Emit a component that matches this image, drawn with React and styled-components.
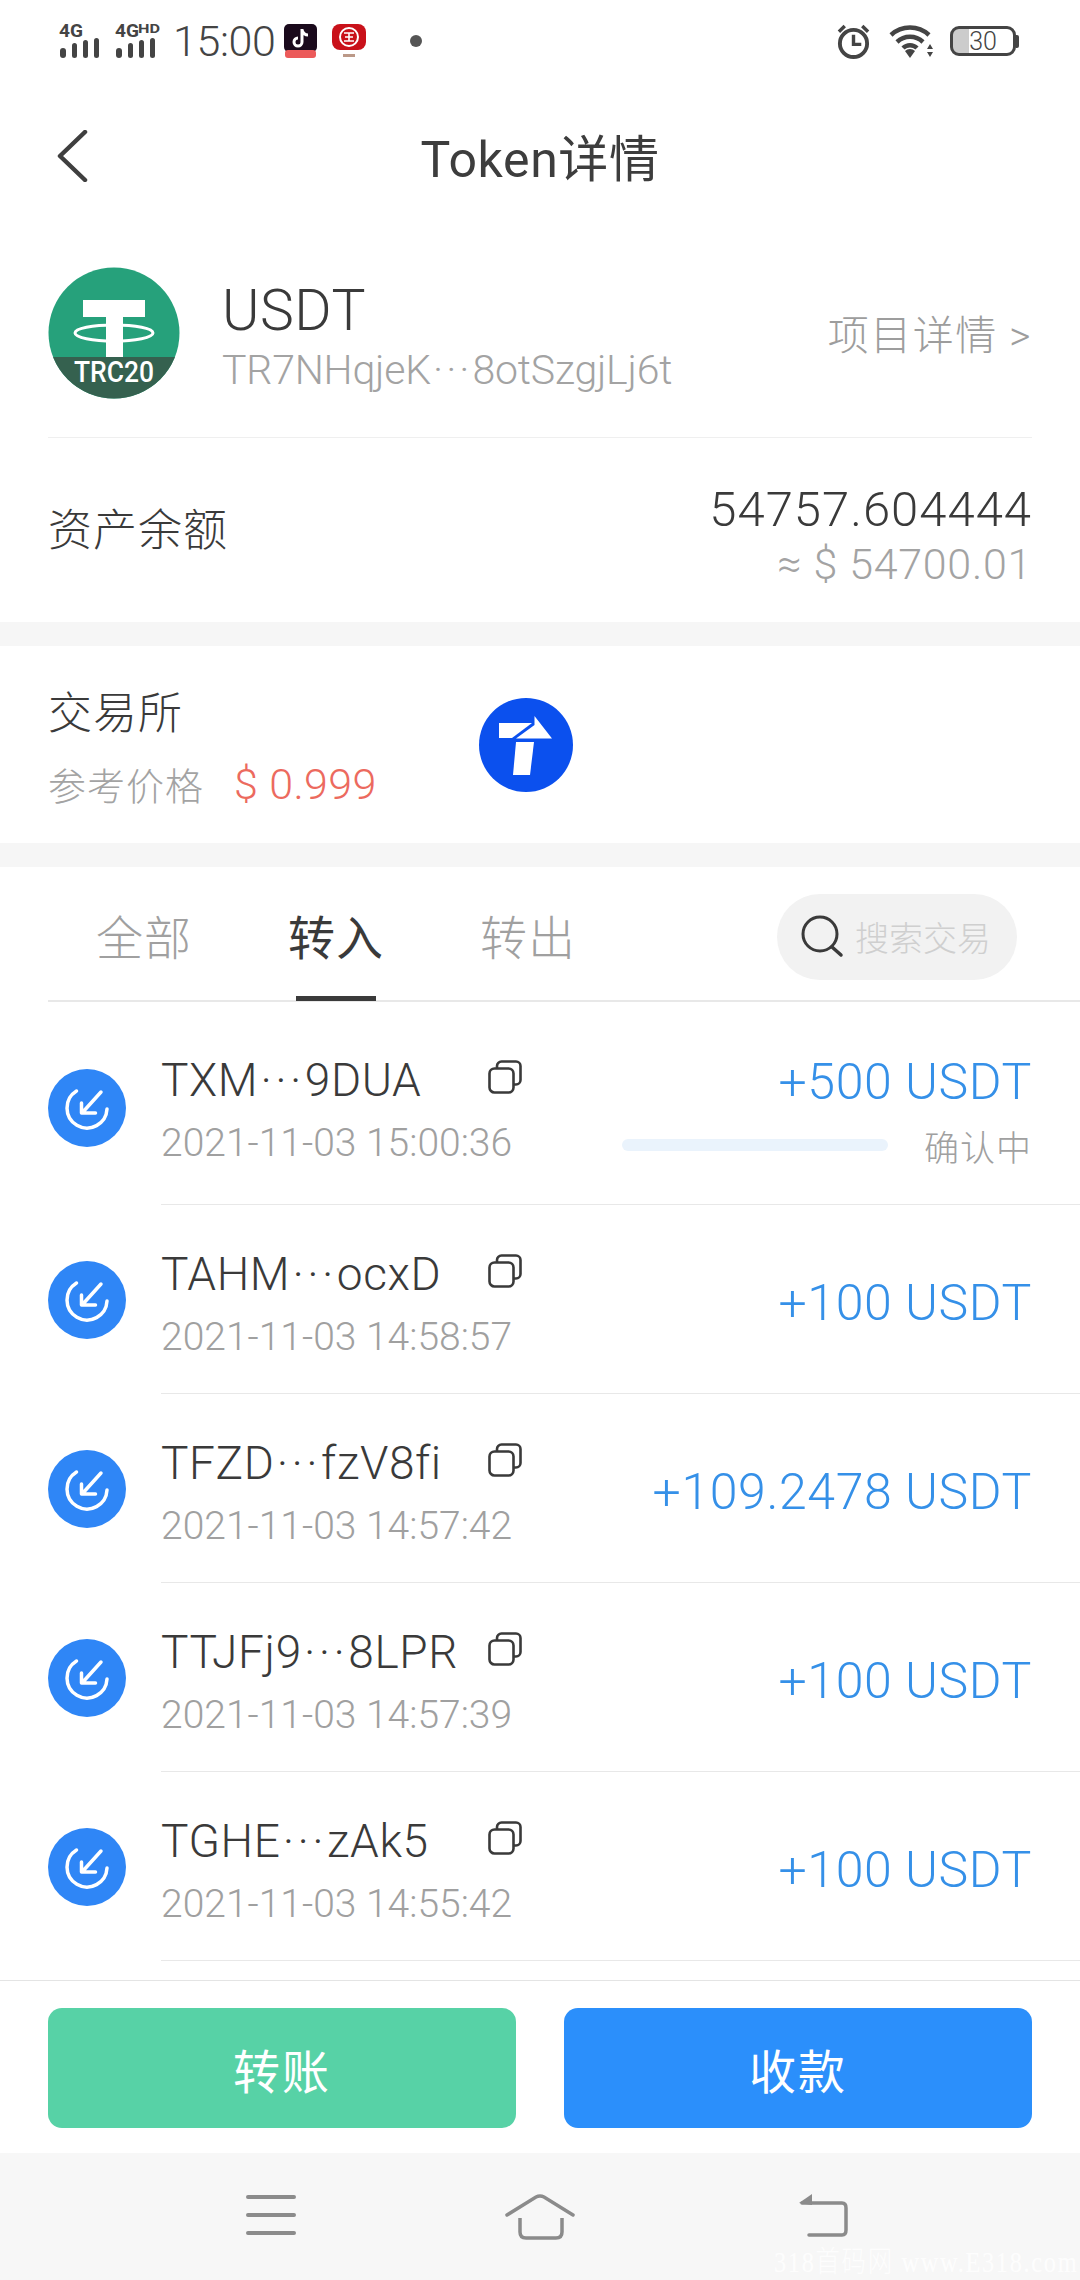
import React from "react";
import styled, { createGlobalStyle } from "styled-components";

const Global = createGlobalStyle`
  html, body { margin: 0; padding: 0; background: #fff; }
  * { box-sizing: border-box; }
`;
const CJK = `Roboto, "Noto Sans CJK SC", sans-serif`;

const Page = styled.div`
  position: relative; width: 1080px; height: 2280px; display: flex; flex-direction: column;
  overflow: hidden; background: #fff; font-family: ${CJK}; font-weight: 300; color: #3a3a3a;
`;
const StatusBar = styled.div`
  height: 80px; padding: 18px 61px 0 58px; display: flex; align-items: flex-start; justify-content: space-between;
`;
const StatusGroup = styled.div`display: flex; align-items: center; height: 46px;`;
const SignalWrap = styled.svg`margin-right: 10px; overflow: visible;`;
const Clock = styled.span`font-size: 43px; font-weight: 300; color: #444; margin: 0 9px 0 3px; letter-spacing: -0.4px;`;
const BankGap = styled.span`width: 15px;`;
const Dot = styled.span`width: 12px; height: 12px; border-radius: 50%; background: #555; margin-left: 44px;`;
const BatteryBox = styled.span`
  width: 66px; height: 30px; border: 3px solid #444; border-radius: 9px; margin-left: 14px;
  display: flex; align-items: center; justify-content: center; font-size: 25px; color: #444; line-height: 1; font-weight: 300;
  background: linear-gradient(90deg, #ccc 0 16px, #fff 16px);
`;
const BatteryCap = styled.span`width: 3px; height: 13px; background: #444; border-radius: 0 2px 2px 0;`;
const Header = styled.div`
  height: 154px; display: flex; align-items: center; justify-content: center; position: relative; padding-bottom: 5px;
`;
const Back = styled.svg`position: absolute; left: 56px; top: 50px;`;
const Title = styled.h1`margin: 0; font-size: 50px; font-weight: 400; color: #3d3d3d; letter-spacing: 0.6px;`;
const TokenRow = styled.div`
  margin: 0 48px; height: 204px; display: flex; align-items: center; border-bottom: 1px solid #efefef; padding-bottom: 6px;
`;
const TokenInfo = styled.div`margin-left: 42px; padding-top: 9px; flex: 1; display: flex; flex-direction: column;`;
const TokenName = styled.div`font-size: 57px; line-height: 66px; color: #3a3a3a; letter-spacing: 0.5px;`;
const TokenAddr = styled.div`font-size: 41px; line-height: 52px; color: #a3a3a3; letter-spacing: -0.2px;`;
const Dots = styled.span`letter-spacing: 0.075em; margin-left: 0.05em;`;
const DetailLink = styled.div`font-size: 41px; color: #9d9d9d; letter-spacing: 1.5px; margin-bottom: 2px;`;
const BalanceRow = styled.div`
  padding: 0 48px; height: 184px; display: flex; align-items: center; justify-content: space-between;
`;
const Label = styled.div`font-size: 44px; color: #3a3a3a; letter-spacing: 1px; margin-bottom: ${p => p.$lift || 0}px;`;
const BalanceRight = styled.div`text-align: right; padding-top: 9px;`;
const BalanceMain = styled.div`font-size: 49px; line-height: 58px; color: #3a3a3a; letter-spacing: 1px;`;
const BalanceSub = styled.div`font-size: 43px; line-height: 50px; color: #a3a3a3; letter-spacing: 0.7px;`;
const Band = styled.div`height: 24px; background: #f6f6f6; flex: none;`;
const ExchangeRow = styled.div`
  height: 197px; padding: 0 48px; display: flex; align-items: center; gap: 103px;
`;
const ExchangeText = styled.div`display: flex; flex: none; flex-direction: column; gap: 14px; width: 328px;`;
const ExchangePrice = styled.div`display: flex; align-items: center; gap: 30px; font-size: 38px; color: #a3a3a3; letter-spacing: 1px; white-space: nowrap;`;
const Price = styled.span`color: #ec6a5e; font-size: 43px; letter-spacing: 0.4px;`;
const Tabs = styled.div`
  height: 135px; margin-left: 48px; padding: 2px 63px 0 48px; border-bottom: 2px solid #e8e8e8; display: flex; align-items: center;
`;
const Tab = styled.div`
  position: relative; font-size: 47px; margin-right: 96px; letter-spacing: 1px; font-weight: ${p => p.$active ? 400 : 300};
  color: ${p => p.$active ? "#3a3a3a" : "#a0a0a0"};
  &::after {
    content: ""; display: ${p => p.$active ? "block" : "none"}; position: absolute; left: 8px; right: 8px; bottom: -32px; height: 5px; background: #3a3a3a;
  }
`;
const Search = styled.div`
  margin-left: auto; width: 240px; height: 86px; border-radius: 43px; background: #f2f2f2;
  display: flex; align-items: center; padding-left: 24px; gap: 10px; font-size: 34px; color: #cfcfcf; margin-top: 4px;
`;
const List = styled.div`flex: 1; overflow: hidden;`;
const Row = styled.div`
  height: ${p => p.$h}px; padding-left: 48px; display: flex; align-items: center;
`;
const RowIcon = styled.svg`flex: none; margin-top: ${p => p.$first ? 8 : 0}px;`;
const RowBody = styled.div`
  flex: 1; height: 100%; margin-left: 35px; padding: ${p => p.$first ? 4 : 0}px 48px 0 0; border-bottom: 1px solid #e8e8e8;
  display: flex; align-items: center; justify-content: space-between;
`;
const RowLeft = styled.div`display: flex; flex-direction: column; gap: 11px; padding-top: 9px;`;
const AddrLine = styled.div`display: flex; align-items: center; width: 360px; justify-content: space-between; font-size: 46px; line-height: 56px; color: #3a3a3a; letter-spacing: 0.6px;`;
const CopyBtn = styled.svg`margin: -6px -1px 0 0; flex: none;`;
const Time = styled.div`font-size: 39px; line-height: 48px; color: #a0a0a0;`;
const RowRight = styled.div`display: flex; flex-direction: column; align-items: flex-end; gap: 8px; padding-top: ${p => p.$first ? 12 : 8}px;`;
const Amount = styled.div`font-size: 50px; line-height: 60px; color: #3590e8; letter-spacing: 0.6px;`;
const ProgressLine = styled.div`display: flex; align-items: center; gap: 36px; font-size: 35px; color: #a0a0a0; letter-spacing: 1px;`;
const Progress = styled.span`width: 266px; height: 12px; border-radius: 6px; background: #eaf3fc;`;
const Actions = styled.div`
  height: 173px; flex: none; padding: 27px 48px 0; border-top: 1px solid #e4e4e4; background: #fff; display: flex; gap: 48px; align-items: flex-start;
`;
const ActionBtn = styled.button`
  flex: 1; height: 120px; border: 0; border-radius: 14px; background: ${p => p.$bg}; color: #fff;
  font-family: ${CJK}; font-size: 47px; font-weight: 400; letter-spacing: 2px;
`;
const NavBar = styled.div`
  height: 127px; flex: none; background: #f7f7f7;
`;
const NavSlot = styled.div`position: absolute; top: 2194px; left: ${p => p.$x}px;`;
const Watermark = styled.div`
  position: absolute; right: 2px; bottom: 0; font-family: "Liberation Serif", "Noto Sans CJK SC", serif;
  font-size: 29px; color: rgba(255,255,255,.8); letter-spacing: 2px; transform: scaleX(.84); transform-origin: right; white-space: nowrap;
`;

const Signal = ({ extra }) => (
  <SignalWrap width="46" height="36" viewBox="0 0 46 36">
    <text x="1" y="14" fontFamily="Roboto, sans-serif" fontWeight="700" fontSize="18" fill="#444" textLength="24" lengthAdjust="spacingAndGlyphs">4G</text>
    {extra && <text x="24" y="10" fontFamily="Roboto, sans-serif" fontWeight="700" fontSize="12" fill="#444" textLength="22" lengthAdjust="spacingAndGlyphs">{extra}</text>}
    <rect x="2" y="25" width="6" height="10" rx="3" fill="#444" />
    <rect x="14" y="20" width="5" height="15" rx="2.500" fill="#444" />
    <rect x="25" y="17" width="5" height="18" rx="2.500" fill="#444" />
    <rect x="36" y="15" width="5" height="20" rx="2.500" fill="#444" />
  </SignalWrap>
);
const TiktokIcon = () => (
  <svg width="33" height="34" viewBox="0 0 33 34">
    <rect width="33" height="28" rx="5" fill="#1a0a1c" />
    <path d="M18 5v13a4 4 0 1 1-4-4M18 6c1 3 3 5 6 5" fill="none" stroke="#fff" strokeWidth="3" />
    <rect x="1" y="26" width="31" height="8" rx="3" fill="#ec5a5a" />
  </svg>
);
const BankIcon = () => (
  <svg width="34" height="34" viewBox="0 0 34 34">
    <rect width="34" height="26" rx="8" fill="#c9111a" />
    <circle cx="17" cy="13" r="9" fill="none" stroke="#fff" strokeWidth="2" />
    <path d="M12 9h10M12 17h10M17 9v8M13 13h8" stroke="#fff" strokeWidth="1.600" />
    <rect x="11" y="30" width="12" height="3" fill="#b98" />
  </svg>
);
const Alarm = () => (
  <svg width="35" height="35" viewBox="0 0 36 36" style={{ marginRight: 18 }}>
    <circle cx="18" cy="20" r="14" fill="none" stroke="#444" strokeWidth="4" />
    <path d="M18 11v10h8" fill="none" stroke="#444" strokeWidth="3.500" />
    <path d="M3 8l6-6M33 8l-6-6" stroke="#444" strokeWidth="3.500" />
  </svg>
);
const Wifi = () => (
  <svg width="47" height="34" viewBox="0 0 47 34">
    <path d="M2 11a28 28 0 0 1 38 0M8 18a19 19 0 0 1 26 0M14 24a10 10 0 0 1 14 0" fill="none" stroke="#444" strokeWidth="4.500" />
    <path d="M16 27a7 7 0 0 1 10 0l-5 7z" fill="#444" />
    <path d="M41 20l3 5h-6zM41 33l3-5h-6z" fill="#444" />
  </svg>
);
const TetherLogo = () => (
  <svg width="132" height="132" viewBox="0 0 132 132" style={{ flex: "none" }}>
    <defs><clipPath id="c"><circle cx="66" cy="66" r="65.5" /></clipPath></defs>
    <g clipPath="url(#c)">
      <rect width="132" height="132" fill="#26a17b" />
      <path d="M35 33h62v17H75v45H58V50H35z" fill="#fff" />
      <ellipse cx="66" cy="66" rx="39" ry="8" fill="none" stroke="#fff" strokeWidth="3" />
      <rect y="90" width="132" height="42" fill="#35614f" />
      <text x="66" y="115" textAnchor="middle" fontFamily="Roboto, sans-serif" fontWeight="500" fontSize="30" fill="#fff" textLength="80" lengthAdjust="spacingAndGlyphs">TRC20</text>
    </g>
  </svg>
);
const ExchangeLogo = () => (
  <svg width="94" height="94" viewBox="0 0 94 94" style={{ flex: "none" }}>
    <circle cx="47" cy="47" r="47" fill="#0b50ee" />
    <path d="M20 25h33L33 40H20z" fill="#fff" />
    <path d="M55.500 18L73 40.500H37L55.500 27z" fill="#fff" />
    <path d="M37 44h18l-4 33H34z" fill="#fff" />
  </svg>
);
const InIcon = ({ first }) => (
  <RowIcon $first={first} width="78" height="78" viewBox="0 0 78 78">
    <circle cx="39" cy="39" r="39" fill="#2f86f6" />
    <path d="M28.500 22A20 20 0 1 0 59 40" fill="none" stroke="#fff" strokeWidth="3.500" strokeLinecap="round" />
    <path d="M53 23L34 44M33.500 34v10h14" fill="none" stroke="#fff" strokeWidth="3.500" strokeLinecap="round" strokeLinejoin="round" />
  </RowIcon>
);
const CopyIcon = () => (
  <CopyBtn width="34" height="34" viewBox="0 0 34 34">
    <rect x="1.500" y="8.500" width="24" height="24" rx="5" fill="#fff" stroke="#3a3a3a" strokeWidth="2.600" />
    <path d="M9 8V6a4.500 4.500 0 0 1 4.500-4.500H28A4.500 4.500 0 0 1 32.500 6v14a4.500 4.500 0 0 1-4.500 4.500h-2" fill="none" stroke="#3a3a3a" strokeWidth="2.600" />
  </CopyBtn>
);
const SearchIcon = () => (
  <svg width="44" height="44" viewBox="0 0 44 44" style={{ flex: "none" }}>
    <circle cx="19" cy="19" r="17" fill="none" stroke="#3a3a3a" strokeWidth="3" />
    <path d="M31 32l9 8" stroke="#3a3a3a" strokeWidth="3.500" strokeLinecap="round" />
  </svg>
);

const rows = [
  { a: "TXM", b: "9DUA", time: "2021-11-03 15:00:36", amt: "+500 USDT", h: 203, pending: true },
  { a: "TAHM", b: "ocxD", time: "2021-11-03 14:58:57", amt: "+100 USDT", h: 189 },
  { a: "TFZD", b: "fzV8fi", time: "2021-11-03 14:57:42", amt: "+109.2478 USDT", h: 189 },
  { a: "TTJFj9", b: "8LPR", time: "2021-11-03 14:57:39", amt: "+100 USDT", h: 189 },
  { a: "TGHE", b: "zAk5", time: "2021-11-03 14:55:42", amt: "+100 USDT", h: 189 },
];

export default function App() {
  return (
    <Page>
      <Global />
      <StatusBar>
        <StatusGroup>
          <Signal />
          <Signal extra="HD" />
          <Clock>15:00</Clock>
          <TiktokIcon />
          <BankGap />
          <BankIcon />
          <Dot />
        </StatusGroup>
        <StatusGroup>
          <Alarm />
          <Wifi />
          <BatteryBox>30</BatteryBox>
          <BatteryCap />
        </StatusGroup>
      </StatusBar>
      <Header>
        <Back width="32" height="52" viewBox="0 0 32 52">
          <path d="M29 2L4 26l25 24" fill="none" stroke="#3f3f3f" strokeWidth="4.500" strokeLinecap="round" strokeLinejoin="round" />
        </Back>
        <Title>Token详情</Title>
      </Header>
      <TokenRow>
        <TetherLogo />
        <TokenInfo>
          <TokenName>USDT</TokenName>
          <TokenAddr>TR7NHqjeK<Dots>···</Dots>8otSzgjLj6t</TokenAddr>
        </TokenInfo>
        <DetailLink>项目详情 &gt;</DetailLink>
      </TokenRow>
      <BalanceRow>
        <Label $lift={6}>资产余额</Label>
        <BalanceRight>
          <BalanceMain>54757.604444</BalanceMain>
          <BalanceSub>≈ $ 54700.01</BalanceSub>
        </BalanceRight>
      </BalanceRow>
      <Band />
      <ExchangeRow>
        <ExchangeText>
          <Label>交易所</Label>
          <ExchangePrice>参考价格<Price>$ 0.999</Price></ExchangePrice>
        </ExchangeText>
        <ExchangeLogo />
      </ExchangeRow>
      <Band />
      <Tabs>
        <Tab>全部</Tab>
        <Tab $active>转入</Tab>
        <Tab>转出</Tab>
        <Search><SearchIcon />搜索交易</Search>
      </Tabs>
      <List>
        {rows.map(r => (
          <Row key={r.a} $h={r.h}>
            <InIcon first={r.pending} />
            <RowBody $first={r.pending}>
              <RowLeft>
                <AddrLine><span>{r.a}<Dots>···</Dots>{r.b}</span><CopyIcon /></AddrLine>
                <Time>{r.time}</Time>
              </RowLeft>
              <RowRight $first={r.pending}>
                <Amount>{r.amt}</Amount>
                {r.pending && <ProgressLine><Progress />确认中</ProgressLine>}
              </RowRight>
            </RowBody>
          </Row>
        ))}
      </List>
      <Actions>
        <ActionBtn $bg="#57d2a6">转账</ActionBtn>
        <ActionBtn $bg="#2b8ffb">收款</ActionBtn>
      </Actions>
      <NavBar>
        <NavSlot $x={245}>
          <svg width="52" height="42" viewBox="0 0 52 42"><path d="M3 3h46M3 21h46M3 39h46" stroke="#8b8b8b" strokeWidth="4" strokeLinecap="round" /></svg>
        </NavSlot>
        <NavSlot $x={505}>
          <svg width="72" height="46" viewBox="0 0 72 46"><path d="M2 21L31 3q4-2 8 0l29 18" fill="none" stroke="#8b8b8b" strokeWidth="3.500" strokeLinecap="round" /><path d="M15 24v14q0 6 6 6h30q6 0 6-6V24" fill="none" stroke="#8b8b8b" strokeWidth="3.500" /></svg>
        </NavSlot>
        <NavSlot $x={798}>
          <svg width="54" height="44" viewBox="0 0 54 44"><path d="M4 9h40q4 0 4 5v22q0 5-4 5H11" fill="none" stroke="#8b8b8b" strokeWidth="3.500" strokeLinecap="round" /><path d="M1 9l13-9v11z" fill="#8b8b8b" /></svg>
        </NavSlot>
      </NavBar>
      <Watermark>318首码网 www.E318.com</Watermark>
    </Page>
  );
}
